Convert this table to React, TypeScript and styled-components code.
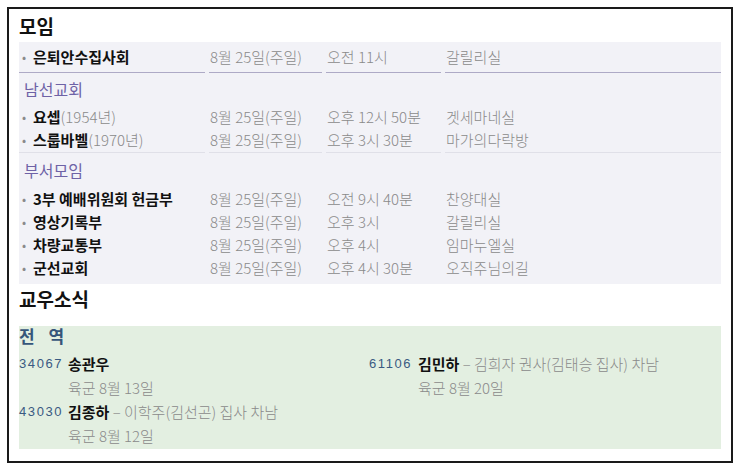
import { ReactElement } from "react";
import styled, { createGlobalStyle } from "styled-components";

const GlobalStyle = createGlobalStyle`
    body {
        margin: 0;
        background: #ffffff;
        font-family: "Noto Sans CJK KR", "Noto Sans", sans-serif;
    }
`;

const Frame = styled.div`
    margin: 7px 0 0 7px;
    width: 726px;
    box-sizing: border-box;
    border: 2px solid #1a1a1a;
    padding: 0 10px 12px 10px;
`;

const SectionTitle = styled.h2<{ $lh: number; $bottom?: number }>`
    margin: 0;
    padding-bottom: ${(p) => p.$bottom ?? 0}px;
    font-size: 19px;
    line-height: ${(p) => p.$lh}px;
    font-weight: 700;
    color: #111;
`;

const Schedule = styled.div`
    display: grid;
    grid-template-columns: 186px 113px 115px 1fr;
    column-gap: 4px;
    background: #f2f2f7;
    padding-bottom: 5px;
`;

type Line = "strong" | "soft" | undefined;

const lineColor = { strong: "#aeaac6", soft: "#e0e0e8" };

const Cell = styled.div<{ $line?: Line; $pt?: number; $pb?: number }>`
    display: flex;
    align-items: center;
    height: 23px;
    padding: ${(p) => p.$pt ?? 0}px 0 ${(p) => p.$pb ?? 0}px 1px;
    font-size: 15px;
    font-weight: 300;
    color: #8a8a8a;
    white-space: nowrap;
    border-bottom: ${(p) => (p.$line ? `1px solid ${lineColor[p.$line]}` : "none")};
`;

const GroupHead = styled.div<{ $h: number }>`
    grid-column: 1 / -1;
    padding-left: 5px;
    font-size: 16px;
    line-height: ${(p) => p.$h}px;
    color: #6e62a6;
`;

const Bullet = styled.span`
    width: 11px;
    padding-left: 2px;
    flex: none;
    color: #8a8a8a;
    font-size: 13px;
`;

const Name = styled.b`
    font-weight: 700;
    color: #111;
`;

const News = styled.div`
    background: #e3efe1;
    padding-bottom: 2px;
`;

const NewsHead = styled.div`
    font-size: 17px;
    line-height: 20px;
    padding-bottom: 5px;
    font-weight: 700;
    letter-spacing: 5px;
    color: #36567a;
`;

const NewsGrid = styled.div`
    display: grid;
    grid-template-columns: 350px 1fr;
    align-items: start;
`;

const Entry = styled.div`
    display: grid;
    grid-template-columns: 49px 1fr;
    align-items: start;
`;

const Num = styled.span`
    display: flex;
    align-items: center;
    height: 24px;
    padding-top: 1px;
    box-sizing: border-box;
    font-family: "Liberation Sans", Arial, sans-serif;
    font-size: 13px;
    letter-spacing: 1.6px;
    color: #3a5a82;
`;

const Detail = styled.div`
    display: flex;
    align-items: center;
    height: 24px;
    font-size: 15px;
    font-weight: 300;
    color: #8a8a8a;
    white-space: pre;
`;

type Row = { name: string; extra?: string; date: string; time: string; place: string };

const first: Row = { name: "은퇴안수집사회", date: "8월 25일(주일)", time: "오전 11시", place: "갈릴리실" };

const groups: { title: string; head: number; soft: boolean; rows: Row[] }[] = [
  {
    title: "남선교회",
    head: 32,
    soft: true,
    rows: [
      { name: "요셉", extra: "(1954년)", date: "8월 25일(주일)", time: "오후 12시 50분", place: "겟세마네실" },
      { name: "스룹바벨", extra: "(1970년)", date: "8월 25일(주일)", time: "오후 3시 30분", place: "마가의다락방" },
    ],
  },
  {
    title: "부서모임",
    head: 34,
    soft: false,
    rows: [
      { name: "3부 예배위원회 헌금부", date: "8월 25일(주일)", time: "오전 9시 40분", place: "찬양대실" },
      { name: "영상기록부", date: "8월 25일(주일)", time: "오후 3시", place: "갈릴리실" },
      { name: "차량교통부", date: "8월 25일(주일)", time: "오후 4시", place: "임마누엘실" },
      { name: "군선교회", date: "8월 25일(주일)", time: "오후 4시 30분", place: "오직주님의길" },
    ],
  },
];

const soldiers = [
  [
    { num: "34067", name: "송관우", note: "", unit: "육군 8월 13일" },
    { num: "43030", name: "김종하", note: "이학주(김선곤) 집사 차남", unit: "육군 8월 12일" },
  ],
  [{ num: "61106", name: "김민하", note: "김희자 권사(김태승 집사) 차남", unit: "육군 8월 20일" }],
];

const renderRow = (r: Row, key: string, line?: Line, pt = 0, pb = 0) => [
  <Cell key={key + "a"} $line={line} $pt={pt} $pb={pb}>
    <Bullet>•</Bullet>
    <Name>{r.name}</Name>
    {r.extra}
  </Cell>,
  <Cell key={key + "b"} $line={line} $pt={pt} $pb={pb}>{r.date}</Cell>,
  <Cell key={key + "c"} $line={line} $pt={pt} $pb={pb}>{r.time}</Cell>,
  <Cell key={key + "d"} $line={line} $pt={pt} $pb={pb}>{r.place}</Cell>,
];

export default function App(): ReactElement {
  return (
    <>
      <GlobalStyle />
      <Frame>
        <SectionTitle $lh={33}>모임</SectionTitle>
        <Schedule>
          {renderRow(first, "first", "strong", 3, 4)}
          {groups.map((g) => [
            <GroupHead key={g.title} $h={g.head}>{g.title}</GroupHead>,
            ...g.rows.flatMap((r, i) =>
              i === g.rows.length - 1 && g.soft
                ? renderRow(r, g.title + i, "soft", 0, 1)
                : renderRow(r, g.title + i)
            ),
          ])}
        </Schedule>
        <SectionTitle $lh={30} $bottom={12}>교우소식</SectionTitle>
        <News>
          <NewsHead>전 역</NewsHead>
          <NewsGrid>
            {soldiers.map((col, ci) => (
              <div key={ci}>
                {col.map((s) => (
                  <Entry key={s.num}>
                    <Num>{s.num}</Num>
                    <div>
                      <Detail>
                        <Name>{s.name}</Name>
                        {s.note && ` – ${s.note}`}
                      </Detail>
                      <Detail>{s.unit}</Detail>
                    </div>
                  </Entry>
                ))}
              </div>
            ))}
          </NewsGrid>
        </News>
      </Frame>
    </>
  );
}
